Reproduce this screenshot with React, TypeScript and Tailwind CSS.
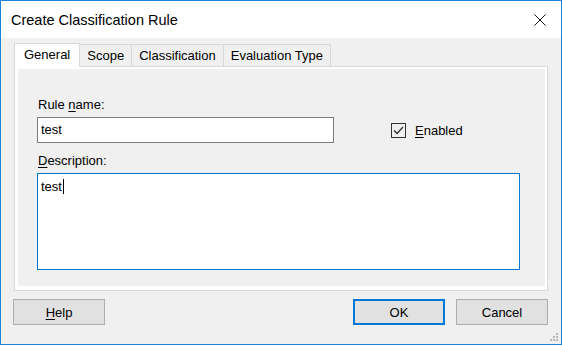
import React from 'react'

const font = { fontFamily: '"Liberation Sans", Arial, sans-serif' }

function Tab({ label, active }: { label: string; active?: boolean }) {
  if (active) {
    return (
      <div className="relative z-10 -mb-px h-[24px] border border-b-0 border-[#d9d9d9] bg-white px-[9px] pt-[3px] leading-[15px]">
        {label}
      </div>
    )
  }
  return (
    <div className="h-[22px] border border-l-0 border-b-0 border-[#d9d9d9] bg-[#f0f0f0] px-[7px] pt-[3px] leading-[15px]">
      {label}
    </div>
  )
}

function Button({ children, primary }: { children: React.ReactNode; primary?: boolean }) {
  return (
    <div
      className={
        'flex h-[26px] w-[92px] items-center justify-center bg-[#e1e1e1] leading-[15px] ' +
        (primary ? 'border-2 border-[#0078d7]' : 'border border-[#adadad]')
      }
    >
      {children}
    </div>
  )
}

export default function App() {
  return (
    <div
      className="relative flex h-[345px] w-[562px] flex-col border border-[#1883d7] bg-[#f0f0f0] text-[13px] text-black"
      style={font}
    >
      {/* title bar */}
      <div className="flex h-[37px] shrink-0 items-center justify-between bg-white pl-[10px] pr-[14px]">
        <span className="text-[14.5px] leading-[18px]">Create Classification Rule</span>
        <svg width="12" height="12" viewBox="0 0 12 12" className="mr-[1px]">
          <path d="M0.5 0.5 L11.5 11.5 M11.5 0.5 L0.5 11.5" stroke="#111" strokeWidth="1" />
        </svg>
      </div>

      <div className="flex flex-1 flex-col pl-[13px] pr-[13px] pt-[5px]">
        {/* tabs */}
        <div className="flex items-end">
          <Tab label="General" active />
          <Tab label="Scope" />
          <Tab label="Classification" />
          <Tab label="Evaluation Type" />
        </div>

        {/* tab page */}
        <div className="h-[225px] border border-[#d9d9d9] bg-white pb-[4px] pl-[3px] pr-[2px] pt-[2px]">
          <div className="h-full bg-[#f0f0f0] pl-[19px] pt-[28px]">
            <div className="pl-[1px] leading-[15px]">
              Rule <span className="underline underline-offset-2">n</span>ame:
            </div>
            <div className="mt-[5px] flex items-center">
              <div className="flex h-[26px] w-[297px] items-center border border-[#7a7a7a] bg-white pl-[3px]">
                test
              </div>
              <div className="ml-[57px] flex items-center">
                <div className="flex h-[15px] w-[15px] items-center justify-center border border-[#333] bg-[#f0f0f0]">
                  <svg width="11" height="9" viewBox="0 0 11 9">
                    <path d="M1 4.5 L4 7.5 L10 1" fill="none" stroke="#333" strokeWidth="1.3" />
                  </svg>
                </div>
                <span className="ml-[9px] leading-[15px]">
                  <span className="underline underline-offset-2">E</span>nabled
                </span>
              </div>
            </div>
            <div className="mt-[10px] pl-[1px] leading-[15px]">
              <span className="underline underline-offset-2">D</span>escription:
            </div>
            <div className="mt-[5px] h-[97px] w-[483px] border border-[#0078d7] bg-white pl-[3px] pt-[3px]">
              <span className="inline-flex items-center leading-[15px]">
                test
                <span className="ml-[1px] inline-block h-[15px] w-px bg-black" />
              </span>
            </div>
          </div>
        </div>

        {/* buttons */}
        <div className="-ml-px mt-[8px] flex">
          <Button>
            <span>
              <span className="underline underline-offset-2">H</span>elp
            </span>
          </Button>
          <div className="flex-1" />
          <Button primary>OK</Button>
          <div className="w-[11px]" />
          <Button>Cancel</Button>
        </div>
      </div>

      {/* size grip */}
      <svg className="absolute bottom-[2px] right-[2px]" width="10" height="10" viewBox="0 0 10 10">
        <g fill="#b8b8b8">
          <rect x="7" y="1" width="2" height="2" />
          <rect x="4" y="4" width="2" height="2" />
          <rect x="7" y="4" width="2" height="2" />
          <rect x="1" y="7" width="2" height="2" />
          <rect x="4" y="7" width="2" height="2" />
          <rect x="7" y="7" width="2" height="2" />
        </g>
      </svg>
    </div>
  )
}
